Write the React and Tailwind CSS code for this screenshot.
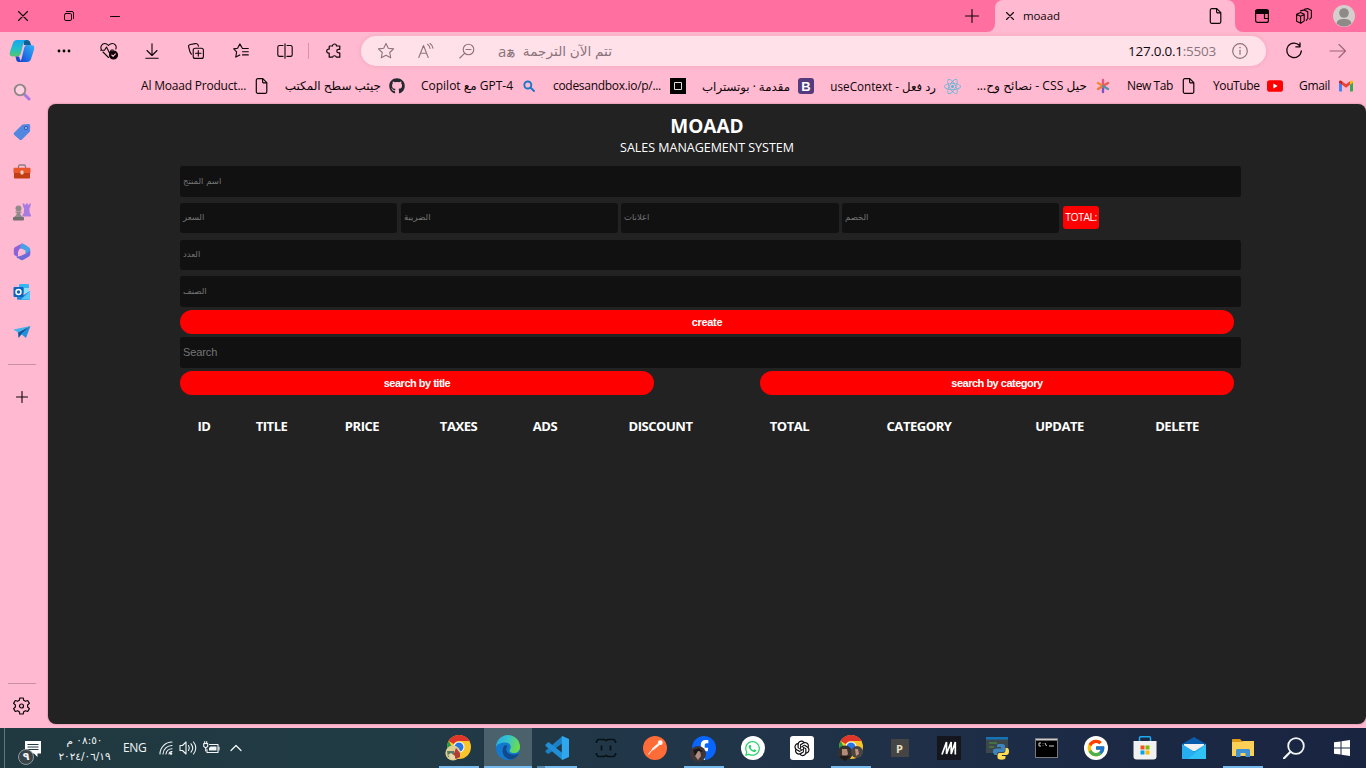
import React from "react";
import { FaGithub, FaReact, FaWhatsapp, FaFacebookF } from "react-icons/fa";
import { FcGoogle } from "react-icons/fc";
import { AiOutlineOpenAI } from "react-icons/ai";

function Svg({ w = 16, h, box, className = "", children, sw = 1.1 }) {
  const hh = h || w;
  return (
    <svg width={w} height={hh} viewBox={box || `0 0 ${w} ${hh}`} fill="none" stroke="currentColor" strokeWidth={sw} strokeLinecap="round" strokeLinejoin="round" className={`shrink-0 ${className}`}>
      {children}
    </svg>
  );
}

const FileIcon = () => (
  <Svg w={16} sw={1.2}>
    <path d="M3.8.7h5l4 4v9.1a1.5 1.5 0 0 1-1.5 1.5H3.8a1.5 1.5 0 0 1-1.5-1.5V2.2A1.5 1.5 0 0 1 3.8.7zM8.6.9v2.8a1.2 1.2 0 0 0 1.2 1.2h2.8" />
  </Svg>
);

function TitleBar() {
  return (
    <div className="flex h-8 shrink-0 items-stretch bg-[#ff6f9f]">
      <div className="flex w-[46px] items-center justify-center"><Svg w={10} sw={1.1}><path d="M.5.5l9 9M9.5.5l-9 9" /></Svg></div>
      <div className="flex w-[46px] items-center justify-center"><Svg w={10} sw={1}><rect x=".5" y="2.5" width="7" height="7" rx="1.4" /><path d="M2.5.5H8A1.5 1.5 0 0 1 9.5 2v5.500" /></Svg></div>
      <div className="flex w-[46px] items-center justify-center"><Svg w={10} sw={1}><path d="M.5 5.500h9" /></Svg></div>
      <div className="flex flex-1 items-center justify-end pr-2"><Svg w={14} sw={1.1}><path d="M7 .5v13M.5 7h13" /></Svg></div>
      <svg width="8" height="32" className="shrink-0" viewBox="0 0 8 32"><path d="M8 24v8H0a8 8 0 0 0 8-8z" fill="#ffb9d0" /></svg>
      <div className="flex w-[240px] items-center rounded-t-lg bg-[#ffb9d0] pl-[11px] pr-[11px]">
        <Svg w={8} sw={1.1}><path d="M.5.5l7 7M7.500.5l-7 7" /></Svg>
        <span className="ml-[9px] flex-1 text-[11.500px] tracking-[-0.1px]">moaad</span>
        <FileIcon />
      </div>
      <svg width="8" height="32" className="shrink-0" viewBox="0 0 8 32"><path d="M0 24v8h8a8 8 0 0 1-8-8z" fill="#ffb9d0" /></svg>
      <div className="flex w-[38px] items-center justify-center"><Svg w={14} sw={1.2}><rect x=".6" y=".6" width="12.800" height="12.800" rx="2" /><path d="M1 1.500h12v2.800H1z" fill="currentColor" /><path d="M9.500 4.500v5h4" /></Svg></div>
      <div className="flex w-[46px] items-center justify-center"><Svg w={16} sw={1.1}><path d="M.6 6.300l4-1.800 3.600 1.800v6.600l-3.400 2.300-4.200-2zM.8 6.500l3.800 1.700 3.500-1.700M4.600 8.200v6.600" /><path d="M4.500 2.900l3.700-1 3.600 1.800v6.800l-1.500 1.900M8.400 1.200l3.300-.6 3.700 1.900v6.800l-1.700 1.800" /></Svg></div>
      <div className="flex w-[39px] items-center pl-[6px]">
        <svg width="22" height="22" viewBox="0 0 22 22"><circle cx="11" cy="11" r="11" fill="#d2cfcd" /><circle cx="11" cy="8" r="4.800" fill="#8e8a87" /><path d="M3.500 18.500c1-4 4-4.500 7.500-4.500s6.500.5 7.500 4.500a11 11 0 0 1-15 0z" fill="#8e8a87" /></svg>
      </div>
    </div>
  );
}

const Tool = ({ children, className = "w-11" }) => <div className={`flex h-[38px] shrink-0 items-center justify-center ${className}`}>{children}</div>;

function CopilotLogo() {
  return (
    <svg width="26" height="24" viewBox="0 0 26 24">
      <defs>
        <linearGradient id="c1" x1="0" y1="0" x2="0" y2="1"><stop stopColor="#15a7ef" /><stop offset=".55" stopColor="#20c0c7" /><stop offset="1" stopColor="#55c66a" /></linearGradient>
        <linearGradient id="c2" x1="1" y1="0" x2="0" y2="1"><stop stopColor="#35b1f5" /><stop offset=".6" stopColor="#1d72e8" /><stop offset="1" stopColor="#123fce" /></linearGradient>
      </defs>
      <path d="M14 1h4c3 0 3.500 3 4 5h-7z" fill="#0d5f94" />
      <path d="M8 1h10c-2 0-3 1-3.500 3L12 14c-.7 2.500-2 3.500-4 3.500H4c-4 0-3.500-3-2.800-5.500L4 4c.8-2.300 2-3 4-3z" fill="url(#c1)" />
      <path d="M7 17.500h3l2 5.500H9.500c-2 0-2.500-3-3-5.500z" fill="#1748cf" />
      <path d="M18 6h4c4 0 3.500 3 2.800 5.500L22 20c-.8 2.300-2 3-4 3H9.500c1.500 0 2.500-1.500 3-3L15 9.500C15.700 7 16.500 6 18 6z" fill="url(#c2)" />
    </svg>
  );
}

function Toolbar() {
  return (
    <div className="flex h-10 shrink-0 items-start">
      <div className="flex h-[38px] w-[43px] shrink-0 items-center pl-[9px]"><CopilotLogo /></div>
      <Tool className="w-[42px]"><svg width="14" height="4" viewBox="0 0 14 4"><circle cx="2" cy="2" r="1.400" /><circle cx="7" cy="2" r="1.400" /><circle cx="12" cy="2" r="1.400" /></svg></Tool>
      <Tool className="w-[48px]"><Svg w={18}><path d="M1.500 8C-.2 4.500 2 1.500 4.800 1.500 7 1.500 8 3 8.500 3.500 9 3 10 1.500 12.200 1.500c2.800 0 4.800 2.600 3.600 5.500M3 10l5.500 5.500M.7 8.300h3.800l2-3.300 3 6 1.800-3h2" /><circle cx="13.500" cy="13" r="4" fill="currentColor" /><path d="M11.800 13l1.300 1.300 2.300-2.500" stroke="#ffb9d0" /></Svg></Tool>
      <Tool className="w-[38px]"><Svg w={14} h={16} sw={1.1}><path d="M7 .7v11.500M2 7.500l5 5 5-5M.8 15.300h12.400" /></Svg></Tool>
      <Tool className="w-[49px]"><Svg w={16} h={16}><rect x="5.200" y="5.200" width="10.200" height="10.200" rx="2" /><path d="M10.300 7.500v5.600M7.500 10.300h5.600M3.500 11.200 C2.500 10.500 2 9 1.700 8L.7 4C.3 2.700 1 1.800 2.200 1.500L7.500.6c1.300-.2 2 .3 2.500 1.200l.5 1.500" /></Svg></Tool>
      <Tool className="w-[41px]"><Svg w={16} h={16}><path d="M9.300 5.200L6.800.9 4.600 5.300.7 5.900l2.900 3-.8 5.200 4-2.200M9.500 5.500h5.800M9.500 8.700h5.800M9.500 11.900h5.800" /></Svg></Tool>
      <Tool className="w-[47px]"><Svg w={16} h={16}><path d="M6 2.500H2.500a1.700 1.700 0 0 0-1.700 1.700v7.500a1.700 1.700 0 0 0 1.700 1.700H6M10 2.500h3.500a1.700 1.700 0 0 1 1.700 1.700v7.500a1.700 1.700 0 0 1-1.700 1.700H10M8 .7v14.600" /></Svg></Tool>
      <div className="mt-[11px] h-4 w-px shrink-0 bg-[#cf96a9]" />
      <Tool className="w-[50px]"><Svg w={16} h={16} sw={1.2}><path d="M4 3h2.500a2 2 0 0 1 4 0h3.300v3.300h-1.200a1.800 1.800 0 0 0 0 3.600h1.200v4.300h-3.500a1.900 1.900 0 0 0-3.700 0H3.200v-4H2.700a2 2 0 0 1 0-4h.5V3.800a.8.8 0 0 1 .8-.8z" /></Svg></Tool>
      <div className="ml-0.5 mt-1 flex h-[30px] w-[905px] shrink-0 items-center rounded-full bg-[#ffe1ea] text-[#8b747c] shadow-[0_0_4px_rgba(150,60,90,0.15)]">
        <Svg w={18} h={18} className="ml-[16px]"><path d="M9 1.400l2.300 4.800 5.300.7-3.900 3.600 1 5.200L9 13.200l-4.700 2.500 1-5.200L1.400 6.900l5.300-.7z" /></Svg>
        <Svg w={16} h={16} className="ml-[23px]"><path d="M.8 14.500L5.500 2.500l4.700 12M2.500 10.200h6M9.500 1.300c1.600 1 2.300 2.200 2.600 4.200M12 .5c1.800 1.200 2.600 2.700 3 4.700" /></Svg>
        <Svg w={16} h={16} className="ml-[25px]"><circle cx="9.500" cy="6.500" r="5.300" /><path d="M5.600 10.300L.8 15M7 6.500h5" /></Svg>
        <span className="ml-[23px] w-[25px] whitespace-nowrap font-['Open_Sans','Noto_Sans_CJK_JP',sans-serif] text-[15px] leading-none">a<span className="text-[9px] font-bold">あ</span></span>
        <span dir="rtl" className="w-[89px] whitespace-nowrap text-[13.700px]">تتم الآن الترجمة</span>
        <div className="flex-1" />
        <span className="w-[88px] whitespace-nowrap text-[13.500px] tracking-[-0.25px]"><span className="text-[#100a0c]">127.0.0.1</span>:5503</span>
        <Svg w={16} h={16} className="ml-4 mr-[18px]" sw={1.2}><circle cx="8" cy="8" r="7.300" /><path d="M8 7.300v4" /><path d="M8 4.600v.2" strokeWidth="1.500" /></Svg>
      </div>
      <Tool className="w-[56px]"><Svg w={18} h={18} sw={1.3}><path d="M14.500 3.500A7.300 7.300 0 1 0 16.300 9M15 .8v4h-4.200" /></Svg></Tool>
      <Tool className="w-[32px] text-[#9c6577]"><Svg w={18} h={16}><path d="M1 8h15.500M10 1.500L16.500 8 10 14.500" /></Svg></Tool>
    </div>
  );
}

const Star = () => (
  <svg width="16" height="16" viewBox="0 0 16 16" strokeWidth="2.400" strokeLinecap="round"><path d="M8 8V2" stroke="#e8528a" /><path d="M8 8v6" stroke="#7a52c9" /><path d="M8 8L3 5" stroke="#f58a2c" /><path d="M8 8l5-3" stroke="#ef5c4a" /><path d="M8 8l-5 3" stroke="#ee7a3a" /><path d="M8 8l5 3" stroke="#5b8fa9" /></svg>
);
const Gmail = () => (
  <svg width="16" height="16" viewBox="0 0 16 16"><path d="M1 4v8.500c0 .6.400 1 1 1h2V6.500z" fill="#4285f4" /><path d="M15 4v8.500c0 .6-.4 1-1 1h-2V6.500z" fill="#34a853" /><path d="M12 3.300v3.400l3-2.200V4c0-1.600-1.800-2-3-.7z" fill="#fbbc04" /><path d="M4 3.300v3.400L1 4.500V4c0-1.600 1.800-2 3-.7z" fill="#c5221f" /><path d="M4 3.200l4 3 4-3v3.600l-4 3-4-3z" fill="#ea4335" /></svg>
);

const bookmarks = [
  ["Al Moaad Product...", "w-[105px]", "ltr", <FileIcon />, "text-[12px] tracking-[-0.2px]"],
  ["جيثب سطح المكتب", "w-[95px]", "rtl", <FaGithub size={16} color="#24292f" />, "text-[12px]"],
  ["GPT-4 مع Copilot", "w-[92px]", "rtl", <Svg w={16} sw={1.9} className="text-[#1a78c8]"><circle cx="6.800" cy="7" r="3.500" /><path d="M9.500 9.500l3.500 3.500" /></Svg>, "text-[12px]"],
  ["codesandbox.io/p/...", "w-[109px]", "ltr", <svg width="16" height="16" viewBox="0 0 16 16"><path d="M0 0h16v16H0z" /><path d="M4.500 4.500h7v7h-7z" fill="none" stroke="#ddd" /></svg>, "text-[12px] tracking-[-0.3px]"],
  ["مقدمة · بوتستراب", "w-[88px]", "rtl", <span className="flex h-4 w-4 shrink-0 items-center justify-center rounded-[3px] bg-[#553b7d] font-['Liberation_Sans',sans-serif] text-[13px] font-bold leading-none text-white">B</span>, "text-[11.800px]"],
  ["رد فعل - useContext", "w-[106px]", "rtl", <FaReact size={17} color="#5cb4d6" className="-mr-px shrink-0" />, "text-[11.700px]"],
  ["حيل CSS - نصائح وح...", "w-[111px]", "rtl", <Star />, "text-[12.200px]"],
  ["New Tab", "w-[46px]", "ltr", <FileIcon />, "text-[12px] tracking-[-0.4px]"],
  ["YouTube", "w-[46px]", "ltr", <svg width="16" height="16" viewBox="0 0 16 16"><rect y="2.200" width="16" height="11.500" rx="2.800" fill="red" /><path d="M6.400 5.600v4.800L10.600 8z" fill="#fff" /></svg>, "text-[12px] tracking-[-0.4px]"],
  ["Gmail", "w-[31px]", "ltr", <Gmail />, "text-[12px] tracking-[-0.3px]"],
];

function Bookmarks() {
  return (
    <div className="flex h-8 shrink-0 items-center justify-end gap-4 pb-1 pr-3">
      {bookmarks.map(([t, w, dir, icon, cls]) => (
        <div key={t} className="flex items-center gap-2">
          <span dir={dir} className={`whitespace-nowrap leading-4 ${w} ${cls}`}>{t}</span>
          {icon}
        </div>
      ))}
    </div>
  );
}

const sideIcons = [
  <svg width="18" height="18" viewBox="0 0 18 18" fill="none"><path d="M11 11l5 5" stroke="#a77be0" strokeWidth="3" strokeLinecap="round" /><circle cx="7" cy="7" r="5.300" fill="#ffd0df" stroke="#8c8787" strokeWidth="1.800" /></svg>,
  <svg width="18" height="18" viewBox="0 0 18 18"><path d="M9.500 1.500l6-.5c1 0 1.700.7 1.700 1.700L17 8.500 9 16.500c-.8.8-1.800.8-2.600 0L1.300 12c-.8-.8-.8-1.800 0-2.600z" fill="#5287e0" /><circle cx="13" cy="5" r="1.600" fill="#8fc1ff" stroke="#3e4fae" /></svg>,
  <svg width="18" height="16" viewBox="0 0 18 16"><path d="M5.500 4V2.500C5.500 1.500 6 1 7 1h4c1 0 1.500.5 1.500 1.500V4" fill="none" stroke="#8a7f80" strokeWidth="1.300" /><path d="M.5 5c0-.8.500-1.200 1.200-1.200h14.600c.7 0 1.200.4 1.200 1.200v4H.5z" fill="#e9562a" /><path d="M1 9h16v4.200c0 .8-.5 1.300-1.200 1.300H2.200c-.7 0-1.200-.5-1.200-1.300z" fill="#c33d14" /><rect x="7.500" y="6.500" width="3" height="4" rx="1" fill="#e9d2c4" /></svg>,
  <svg width="18" height="18" viewBox="0 0 18 18"><path d="M9.500.5h1.800v1.300h1.500V.5h2v1.300h1.500V.5h1.700l-.8 3.700-.8.800.3 5L18 12v1.500H9.500V12l1.300-2 .3-5-.8-.8z" fill="#a77be0" /><circle cx="5.500" cy="5.500" r="3" fill="#8f8b8b" /><path d="M2.500 8.500h6v1.200H7.300c0 2 .7 3 2.500 4.300H1.200c1.800-1.300 2.500-2.300 2.500-4.300H2.500z" fill="#8f8b8b" /><rect y="14" width="11" height="3.500" rx="1" fill="#757070" /></svg>,
  <svg width="18" height="18" viewBox="0 0 18 18"><path d="M9 .5l5 2.500-3 2-4.500.8L5 9v5L2 12.500C1 12 .8 11 .8 10V6.800c0-1.300.5-2 1.500-2.700z" fill="#8e62d8" /><path d="M9 .5c.5 0 1 .2 1.500.5L16 4.200c.8.500 1.200 1.300 1.200 2.200v4L12.500 12V7.500L7.500 5c0-2 0-3.500 1.500-4.500z" fill="#45a4e8" /><path d="M17.200 7.500v3.700c0 1-.4 1.700-1.200 2.200l-5.500 3.300c-1 .6-2 .6-3 0L3 14l5-1.200 4.500-2z" fill="#6e6ad8" /></svg>,
  <svg width="18" height="18" viewBox="0 0 18 18"><rect x="6" y="1" width="10" height="9" rx="1" fill="#35b8f1" /><path d="M11 5h5v5h-5z" fill="#8be0fb" /><path d="M4 8l6.500 4L17 8v7.500c0 .8-.5 1.300-1.300 1.300H5.300c-.8 0-1.300-.5-1.300-1.300z" fill="#188bdb" /><path d="M17 8l-9 8.500h8c.6 0 1-.5 1-1z" fill="#51c8f5" /><rect x=".5" y="4" width="10" height="10" rx="1" fill="#0c64ba" /><circle cx="5.500" cy="9" r="2.500" stroke="#fff" strokeWidth="1.500" fill="none" /></svg>,
  <svg width="18" height="18" viewBox="0 0 18 18"><path d="M17.500 3L.5 6.500 5 9.500z" fill="#41b3ee" /><path d="M17.500 3L5 9.500l.5 5.500 2.700-3.300z" fill="#0a5b9e" /><path d="M17.500 3L8.200 11l4.800 4z" fill="#1f91dc" /></svg>,
];

function Gear() {
  const pts = "M6.800 1h3.400l.5 2.300 1.700 1 2.300-.8 1.700 2.900-1.800 1.600v2l1.800 1.600-1.700 2.900-2.300-.8-1.700 1-.5 2.300H6.800l-.5-2.300-1.700-1-2.300.8L.6 11.600 2.400 10V8L.6 6.400l1.700-2.900 2.300.8 1.700-1z";
  return <Svg w={17} h={18} sw={1.2}><path d={pts} /><circle cx="8.500" cy="9" r="2" /></Svg>;
}

function Sidebar() {
  return (
    <div className="flex w-12 shrink-0 flex-col">
      {sideIcons.map((ic, i) => <div key={i} className="flex h-10 w-[44px] shrink-0 items-center justify-center">{ic}</div>)}
      <div className="ml-2 mt-3 h-px w-7 shrink-0 bg-[#c98fa3]" />
      <div className="mt-3 flex h-10 w-[43px] items-center justify-center"><Svg w={12}><path d="M6 .5v11M.5 6h11" /></Svg></div>
      <div className="flex-1" />
      <div className="ml-2 h-px w-7 bg-[#c98fa3]" />
      <div className="flex h-11 w-[43px] items-center justify-center"><Gear /></div>
    </div>
  );
}

const Field = ({ text, className = "", ar = true }) => (
  <div className={`flex items-center rounded-[3px] bg-[#111] pl-[3px] text-[#757575] ${className}`}>
    {ar ? <span dir="rtl" className="pb-px font-['DejaVu_Sans',sans-serif] text-[8.500px] leading-none">{text}</span> : <span className="font-['Liberation_Sans',sans-serif] text-[11px] tracking-[-0.1px]">{text}</span>}
  </div>
);
const Button = ({ children, className = "" }) => <div className={`flex h-6 items-center justify-center rounded-full bg-[#f00] font-['Liberation_Sans',sans-serif] text-[11px] font-bold tracking-[-0.5px] text-white ${className}`}>{children}</div>;

function Page() {
  return (
    <div className="mb-1 flex-1 rounded-lg bg-[#222] pl-[132px] text-white shadow-[0_0_2px_rgba(120,40,70,0.5)]">
      <div className="flex w-[1054px] flex-col items-center">
        <div className="mt-[10px] h-[25px] text-[19px] font-bold leading-6">MOAAD</div>
        <div className="h-[17px] whitespace-nowrap text-[12.500px] leading-[17px] tracking-[-0.02px]">SALES MANAGEMENT SYSTEM</div>
      </div>
      <Field text="اسم المنتج" className="mt-[10px] h-[31px] w-[1061px]" />
      <div className="mt-[6px] flex h-[30px] items-center">
        <Field text="السعر" className="h-[30px] w-[217px]" />
        <Field text="الضريبة" className="ml-1 h-[30px] w-[217px]" />
        <Field text="اعلانات" className="ml-[3px] h-[30px] w-[218px]" />
        <Field text="الخصم" className="ml-[3px] h-[30px] w-[217px]" />
        <div className="mb-px ml-1 flex h-[23px] w-9 items-center justify-center rounded-[3px] bg-[#f00] pt-px text-[10.500px] tracking-[-0.5px]">TOTAL:</div>
      </div>
      <Field text="العدد" className="mt-[7px] h-[30px] w-[1061px]" />
      <Field text="الصنف" className="mt-[6px] h-[31px] w-[1061px]" />
      <Button className="mt-[3px] w-[1054px]"><span className="tracking-[-0.3px]">create</span></Button>
      <Field ar={false} text="Search" className="mt-[3px] h-[31px] w-[1061px]" />
      <div className="mt-[3px] flex w-[1054px] justify-between">
        <Button className="w-[474px]">search by title</Button>
        <Button className="w-[474px]">search by category</Button>
      </div>
      <div className="mt-[21px] grid w-[1053px] grid-cols-[48px_87px_94px_99px_74px_157px_101px_158px_123px_112px] text-center text-[13px] font-bold leading-5 tracking-[-0.45px]">
        {["ID", "TITLE", "PRICE", "TAXES", "ADS", "DISCOUNT", "TOTAL", "CATEGORY", "UPDATE", "DELETE"].map((h) => <span key={h}>{h}</span>)}
      </div>
    </div>
  );
}

const Chrome = ({ variant }) => (
  <svg width="26" height="26" viewBox="0 0 26 26" className="-ml-0.5">
    <circle cx="14" cy="12" r="12" fill="#f9c52b" />
    <path d="M3.600 6A12 12 0 0 1 24.400 6H14a6 6 0 0 0-5.200 3z" fill="#e0352b" />
    <path d="M3.600 6L9 15.500A6 6 0 0 0 14 18l-3 5.600A12 12 0 0 1 3.600 6z" fill="#259b48" />
    <circle cx="14" cy="12" r="5.500" fill="#fff" /><circle cx="14" cy="12" r="4.500" fill="#2876e6" />
    {variant === "scene" ? (
      <g><circle cx="8" cy="18" r="7.600" fill="#ddce92" /><path d="M2 16h7v6H3z" fill="#597a62" /><path d="M8 21l3-8 4 5v4l-4 2z" fill="#b33b35" /><path d="M3 20l3-2 4 3v3H6z" fill="#e8d6a8" /></g>
    ) : (
      <g><circle cx="8" cy="18" r="7.600" fill="#35302e" /><path d="M5 14h5l1 5-3 4-3-3z" fill="#b58b78" /><circle cx="20" cy="17" r="6" fill="#4a4543" /><path d="M18 14h3l1 5-3 2z" fill="#c0937f" /><path d="M2 22c3-2 8-2 11 0l-5 4z" fill="#1d1b1c" /></g>
    )}
  </svg>
);
const Edge = () => (
  <svg width="26" height="26" viewBox="0 0 26 26"><defs><linearGradient id="e1" x1="0" y1="0" x2="1" y2=".3"><stop stopColor="#28a8e0" /><stop offset=".5" stopColor="#34c2cf" /><stop offset="1" stopColor="#68dc52" /></linearGradient></defs><circle cx="13" cy="13" r="12" fill="#1379cf" /><path d="M1 12A12 12 0 0 1 25 12c0 4-3 6-6 6-3.500 0-4.500-1.500-4.500-2.500s1.200-1 1.200-3.500c0-2.500-2.200-4.500-5.200-4.500C6 7.500 2 9 1 12z" fill="url(#e1)" /><path d="M9 11c-4 7 1 14 8 13.300A10 10 0 0 0 24 18c-4 3-11 2-12.500-2.500C11 14 11.500 12 12.500 11 11.500 10 10 10 9 11z" fill="#114a8c" /></svg>
);
const icons = [
  <Chrome variant="scene" />,
  <Edge />,
  <svg width="24" height="24" viewBox="0 0 24 24"><path d="M17.500 0v7L3.500 18 .5 16.200v-1.400z" fill="#1b80c4" /><path d="M.5 8.500L3.500 6l14 11v7L.5 10z" fill="#1f8ed6" /><path d="M17.300 0L24 3v18l-6.700 3c-.3-.2-.5-.7-.5-1.200V1.200c0-.5.2-1 .5-1.200z" fill="#2fa7ee" /></svg>,
  <svg width="22" height="22" viewBox="0 0 22 22" fill="none" stroke="#071216" strokeWidth="1.700"><path d="M1.500 6V4.500l1.500-2h6l2 1 2-1h6l1.500 2V6M1.500 16v1.500l1.500 2h6l2-1 2 1h6l1.500-2V16M6.500 8.500v5M15.500 8.500v5" /></svg>,
  <svg width="24" height="24" viewBox="0 0 24 24"><circle cx="12" cy="12" r="12" fill="#ff6c37" /><circle cx="17.300" cy="6.700" r="2.400" fill="#fff" /><path d="M15 7.800L9.500 12.500 9 14l1.500-.4L16.200 9z" fill="#fff" stroke="#fff" strokeWidth=".7" /><path d="M9 14l-3.700 4.500" stroke="#fff" /></svg>,
  <span className="relative flex h-6 w-6 items-end justify-end overflow-visible rounded-full bg-[#0866ff] pr-[3px] text-white"><FaFacebookF size={20} /><svg className="absolute -bottom-0.5 -left-0.5" width="16" height="16" viewBox="0 0 16 16"><circle cx="8" cy="8" r="8" fill="#3d3536" /><path d="M5 5h5l1 5-3 4-3-4z" fill="#b08b7d" /><path d="M3 4l6-2 4 4-5-1-3 5z" fill="#191617" /></svg></span>,
  <span className="flex h-6 w-6 items-center justify-center rounded-full bg-white text-[#25d366]"><FaWhatsapp size={17} /></span>,
  <span className="flex h-6 w-6 items-center justify-center rounded-[3px] bg-white text-[#111]"><AiOutlineOpenAI size={20} /></span>,
  <Chrome />,
  <span className="flex h-[18px] w-[18px] items-center justify-center rounded-[1px] bg-[#454545] text-[11px] font-bold leading-none text-[#eee0c0]">P</span>,
  <span className="flex h-6 w-6 items-center justify-center bg-[#15151d]"><svg width="16" height="14" viewBox="0 0 16 14" stroke="#fff" strokeWidth="1.700" fill="none"><path d="M1 13.500L5.500 1v12L10.200 1v12L14.300 1v12.500" /></svg></span>,
  <svg width="24" height="24" viewBox="0 0 24 24"><path d="M0 1h22v16H0z" fill="#3c474b" /><path d="M0 1h22v2.500H0z" fill="#1673b7" /><path d="M3 6h8v2H3zM3 10h5v2H3z" fill="#456e45" /><path d="M12 8h4c2 0 3 .8 3 2.500V14c0 1.500-1 2-2.500 2H13c-1.500 0-2 1-2 3H9.500C8 19 7 17.500 7 15.500S8 12.500 10 12.500h5V11h-4v-1c0-1 .3-2 1-2z" fill="#3d83bd" /><path d="M19.500 12H21c1.500 0 2 1.500 2 3.500S22 19 20.500 19H16v1h3.500v1.500c0 1.500-1.500 2.200-4 2.200s-4-.8-4-2.200V19c0-1.500 1-2 2.500-2h3c1.500 0 2.500-1 2.500-3z" fill="#ffdc54" /></svg>,
  <svg width="23" height="20" viewBox="0 0 23 20"><rect x=".5" y=".5" width="22" height="19" fill="#000" stroke="#77797c" /><path d="M1 1h21v1.500H1z" fill="#ccc" /><path d="M6 5H4v3h2M8 5v.5M8 7.500V8M10 5l1.500 3M14 8h5" stroke="#d0d0d0" fill="none" /></svg>,
  <span className="flex h-6 w-6 items-center justify-center rounded-full bg-white"><FcGoogle size={20} /></span>,
  <svg width="24" height="24" viewBox="0 0 24 24"><path d="M6.500 7V1.800c0-.6.400-1 1-1h9c.6 0 1 .4 1 1V7" fill="none" stroke="#1eaaf0" strokeWidth="1.500" /><path d="M.5 5h23v15.500c0 2-1 3-3 3h-17c-2 0-3-1-3-3z" fill="#f1f1f1" /><path d="M7.500 9.500h4v4h-4z" fill="#f25022" /><path d="M12.500 9.500h4v4h-4z" fill="#7fba00" /><path d="M7.500 14.500h4v4h-4z" fill="#00a4ef" /><path d="M12.500 14.500h4v4h-4z" fill="#ffb900" /></svg>,
  <svg width="24" height="24" viewBox="0 0 24 24"><path d="M12 1l12 7v6H0V8z" fill="#0a5cad" /><path d="M2 8h20v7H2z" fill="#f2f2f2" /><path d="M0 8l12 7.500L24 8v15H0z" fill="#27aef0" /><path d="M24 8L6 23h18z" fill="#31c2f5" /></svg>,
  <svg width="24" height="22" viewBox="0 0 24 22"><path d="M1 3c0-.6.400-1 1-1h7l2 2v3H1z" fill="#e09a16" /><path d="M1 5h9l2-1h11v15H1z" fill="#fccf57" /><path d="M5 13.500c0-.8.700-1.500 1.500-1.500h11c.8 0 1.500.7 1.500 1.500V20h-4.500v-4h-5v4H5z" fill="#3e91d4" /></svg>,
];
const running = { 0: 1, 5: 1, 8: 1, 16: 1 };

function Taskbar() {
  return (
    <div className="flex h-10 shrink-0 bg-[linear-gradient(90deg,#20383f_0%,#213b45_28%,#213549_52%,#1c2a45_80%,#192441_100%)] text-[#f2f5f6]">
      <div className="ml-1 w-px bg-[#60747b]" />
      <div className="flex w-[429px] items-center">
        <div className="relative ml-[20px] mt-[11px] h-[26px] w-[26px] shrink-0">
          <svg width="28" height="26" viewBox="0 0 28 26"><path d="M0 0h16v12.500h-3.500V16L9 12.500H0z" fill="#fff" /><path d="M2.500 3.500h11M2.500 6h11M2.500 8.500h11" stroke="#213b45" strokeWidth="1" /></svg>
          <span className="absolute -left-[7px] top-[8px] flex h-4 w-4 items-center justify-center rounded-full border border-[#8d999d] bg-[#3a4347] font-['DejaVu_Sans',sans-serif] text-[11px] font-bold leading-none">٩</span>
        </div>
        <div className="ml-[3px] flex w-[61px] flex-col items-center font-['DejaVu_Sans',sans-serif] text-[10.500px] leading-[17px]">
          <span dir="rtl" className="whitespace-nowrap">٠٨:٥٠ م</span>
          <bdo dir="ltr" className="-mt-px whitespace-nowrap">٢٠٢٤/٠٦/١٩</bdo>
        </div>
        <span className="ml-[8px] w-[28px] text-[12px] tracking-[-0.4px]">ENG</span>
        <Svg w={14} h={14} className="ml-[8px]" sw={1.1}><path d="M1 13A12 12 0 0 1 13 1M4 13A9 9 0 0 1 13 4.500M7 13a6 6 0 0 1 6-5.200M10 13a3 3 0 0 1 3-2.500" /><circle cx="12" cy="12.500" r=".8" fill="currentColor" /></Svg>
        <Svg w={18} h={14} className="ml-[6px]"><path d="M1 4.500h2.500L7 1v12L3.500 9.500H1zM9.500 4.500c1 1.500 1 3.500 0 5M12 2.800c2 2.500 2 6 0 8.400M14.500 1c3 3.500 3 8.500 0 12" /></Svg>
        <Svg w={17} h={14} className="ml-[6px]"><path d="M6.500 3.500h8.500v8H4V8.500" /><path d="M16 6v3M.7 2.500h4v2.800L2.700 7l-2-1.700zM1.700.6v2M3.700.6v2M2.700 7v3" /><path d="M7.500 5.500h6v4H6V7z" fill="currentColor" stroke="none" /></Svg>
        <Svg w={12} h={8} className="ml-[10px]" sw={1.3}><path d="M1 6.500l5-5 5 5" /></Svg>
      </div>
      {icons.map((ic, i) => (
        <div key={i} className={`flex w-[49px] shrink-0 flex-col items-center ${i === 1 ? "border-l border-[#213842] bg-[#4b626d]" : ""}`}>
          <div className="flex h-[38px] items-center justify-center pt-[2px]">{ic}</div>
          {i === 1 && <div className="h-0.5 w-full bg-[#76b9ed]" />}
          {i === 2 && <div className="flex h-0.5 w-10 bg-[#76b9ed]"><div className="w-2 bg-[#5587ac]" /></div>}
          {running[i] && <div className="h-0.5 w-10 bg-[#76b9ed]" />}
        </div>
      ))}
      <div className="flex w-[51px] items-center justify-center pl-[3px]"><Svg w={22} h={22} sw={1.8}><circle cx="13" cy="9" r="7.800" /><path d="M7.500 14.800L1 21.300" strokeWidth="2.200" /></Svg></div>
      <div className="flex w-12 items-center justify-center"><svg width="16" height="16" viewBox="0 0 16 16" fill="#fff"><path d="M0 2.300L6.500 1.400v6.100H0zM7.500 1.200L16 0v7.500H7.500zM0 8.500h6.500v6.100L0 13.700zM7.500 8.500H16V16l-8.500-1.200z" /></svg></div>
    </div>
  );
}

export default function App() {
  return (
    <div className="flex h-[768px] w-[1366px] flex-col overflow-hidden bg-[#ffb9d0] font-['Open_Sans','Noto_Sans','DejaVu_Sans',sans-serif] text-[#0d0508]">
      <TitleBar />
      <Toolbar />
      <div className="flex min-h-0 flex-1">
        <Sidebar />
        <div className="flex min-w-0 flex-1 flex-col">
          <Bookmarks />
          <Page />
        </div>
      </div>
      <Taskbar />
    </div>
  );
}
